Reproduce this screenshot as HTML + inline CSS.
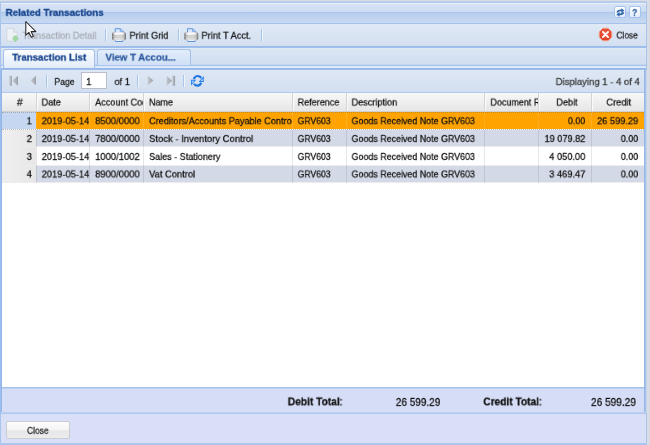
<!DOCTYPE html>
<html>
<head>
<meta charset="utf-8">
<style>
*{box-sizing:border-box;margin:0;padding:0}
html,body{width:650px;height:445px;overflow:hidden;background:#d8dce4;font-family:"Liberation Sans",sans-serif;font-size:10px;color:#111}
div{position:absolute;white-space:nowrap}
.t{left:0;top:0;line-height:16px;height:16px;will-change:transform;transform-origin:0 0;-webkit-text-stroke:0.3px}
.sep{width:2px;height:12px;border-left:1px solid #a9c5ec;border-right:1px solid #eef4fc}
.hl{top:93px;width:1px;height:18px;background:#d4d4d4}
.hl2{top:93px;width:1px;height:18px;background:#fbfbfb}
.cl{overflow:hidden}
.tool{top:6px;width:12px;height:12px;border:1px solid #a6c4ec;border-radius:2px;background:linear-gradient(#fdfeff,#e3edfb)}
</style>
</head>
<body>

<div style="left:0;top:1px;width:647px;height:444px;background:#a8c4ec;border-radius:3px 3px 0 0"></div>
<div style="left:0;top:1px;width:647px;height:1px;background:#bccde8;border-radius:3px 3px 0 0"></div>
<div style="left:0;top:2px;width:647px;height:1px;background:#b2caee"></div>
<div style="left:1px;top:3px;width:645px;height:441px;background:#d3e1f4"></div>
<div style="left:1px;top:3px;width:645px;height:20px;background:linear-gradient(#e8eff9 0,#e8eff9 1px,#d6e3f5 1px,#cedcf2 9px,#abc6ec 9px,#abc6ec 10px,#b8ceed 10px,#c8daf2 20px)"></div>
<div class="tool" style="left:614px"></div><div class="tool" style="left:629px"></div>
<div style="left:1px;top:23px;width:645px;height:1px;background:#a5c3ea"></div>
<div style="left:1px;top:24px;width:645px;height:22px;background:linear-gradient(#e0e8f5,#d3e0f1)"></div>
<div style="left:1px;top:46px;width:645px;height:2px;background:linear-gradient(#9bbcea 0,#9bbcea 50%,#a0bfeb 50%,#a0bfeb 100%)"></div>
<div class="sep" style="left:105px;top:29px"></div>
<div class="sep" style="left:178px;top:29px"></div>
<div class="sep" style="left:261px;top:29px"></div>
<div style="left:1px;top:48px;width:645px;height:17px;background:linear-gradient(#e0e9f6 0,#e0e9f6 1px,#dbe5f4 1px,#d0def1 100%)"></div>
<div style="left:1px;top:64px;width:645px;height:1px;background:#c2d5f0"></div>
<div style="left:1px;top:65px;width:645px;height:1px;background:#a9c5ec"></div>
<div style="left:1px;top:66px;width:645px;height:2px;background:linear-gradient(#d9e6f8 0,#d9e6f8 50%,#e2ecfb 50%,#e2ecfb 100%)"></div>
<div style="left:1px;top:68px;width:645px;height:2px;background:linear-gradient(#94b7e8 0,#94b7e8 50%,#9ebeea 50%,#9ebeea 100%)"></div>
<div style="left:3px;top:49px;width:92px;height:19px;border:1px solid #a3c1ea;border-bottom:none;border-radius:3px 3px 0 0;background:linear-gradient(#fbfdff,#e2ecfa)"></div>
<div style="left:97px;top:49px;width:94px;height:16px;border:1px solid #a3c1ea;border-bottom:none;border-radius:3px 3px 0 0;background:linear-gradient(#e2edfb,#d1e0f6)"></div>
<div style="left:2px;top:70px;width:642px;height:22px;background:linear-gradient(#dee7f4,#d3dff0)"></div>
<div style="left:2px;top:92px;width:642px;height:1px;background:#b0c9ed"></div>
<div style="left:0;top:70px;width:2px;height:343px;background:linear-gradient(90deg,#9dbeec 0,#9dbeec 50%,#92b6ea 50%,#92b6ea 100%)"></div>
<div style="left:644px;top:70px;width:3px;height:343px;background:linear-gradient(90deg,#92b6ea 0,#92b6ea 33.3%,#a6c3ec 33.3%,#a6c3ec 66.6%,#c6d5ea 66.6%,#c6d5ea 100%)"></div>
<div class="sep" style="left:46px;top:75px"></div>
<div style="left:81px;top:72px;width:26px;height:17px;border:1px solid #b9bdcc;background:#fff"></div>
<div class="sep" style="left:137px;top:75px"></div>
<div class="sep" style="left:183px;top:75px"></div>
<div style="left:2px;top:93px;width:642px;height:294px;background:#fff"></div>
<div style="left:2px;top:93px;width:642px;height:18px;background:linear-gradient(#f8f8f8,#e6e6e6)"></div>
<div style="left:2px;top:111px;width:642px;height:1px;background:#d0d0d0"></div>
<div class="hl" style="left:36px"></div><div class="hl2" style="left:37px"></div>
<div class="hl" style="left:89px"></div><div class="hl2" style="left:90px"></div>
<div class="hl" style="left:143px"></div><div class="hl2" style="left:144px"></div>
<div class="hl" style="left:292px"></div><div class="hl2" style="left:293px"></div>
<div class="hl" style="left:346px"></div><div class="hl2" style="left:347px"></div>
<div class="hl" style="left:484px"></div><div class="hl2" style="left:485px"></div>
<div class="hl" style="left:538px"></div><div class="hl2" style="left:539px"></div>
<div class="hl" style="left:591px"></div><div class="hl2" style="left:592px"></div>
<div style="left:2px;top:112.4px;width:642px;height:16.5px;background:#ffa300"></div>
<div style="left:2px;top:112.4px;width:33.5px;height:16.5px;background:#c6d8f1"></div>
<div style="left:2px;top:130px;width:642px;height:16.4px;background:#d3d9e6"></div>
<div style="left:2px;top:130px;width:33.5px;height:16.4px;background:linear-gradient(90deg,#efefef,#e7e7e7)"></div>
<div style="left:2px;top:147.4px;width:642px;height:17.3px;background:#ffffff"></div>
<div style="left:2px;top:147.4px;width:33.5px;height:17.3px;background:linear-gradient(90deg,#efefef,#e7e7e7)"></div>
<div style="left:2px;top:165.6px;width:642px;height:16.6px;background:#d3d9e6"></div>
<div style="left:2px;top:165.6px;width:33.5px;height:16.6px;background:linear-gradient(90deg,#efefef,#e7e7e7)"></div>
<div style="left:2px;top:146.4px;width:642px;height:1px;background:#ededed"></div>
<div style="left:2px;top:164.6px;width:642px;height:1px;background:#ededed"></div>
<div style="left:2px;top:182.2px;width:642px;height:1px;background:#ededed"></div>
<div style="left:36px;top:130px;width:1px;height:53px;background:rgba(90,90,100,0.15)"></div>
<div style="left:36px;top:113px;width:1px;height:16px;border-left:1px dotted rgba(255,235,200,0.3)"></div>
<div style="left:89px;top:130px;width:1px;height:53px;background:rgba(90,90,100,0.15)"></div>
<div style="left:89px;top:113px;width:1px;height:16px;border-left:1px dotted rgba(255,235,200,0.3)"></div>
<div style="left:143px;top:130px;width:1px;height:53px;background:rgba(90,90,100,0.15)"></div>
<div style="left:143px;top:113px;width:1px;height:16px;border-left:1px dotted rgba(255,235,200,0.3)"></div>
<div style="left:292px;top:130px;width:1px;height:53px;background:rgba(90,90,100,0.15)"></div>
<div style="left:292px;top:113px;width:1px;height:16px;border-left:1px dotted rgba(255,235,200,0.3)"></div>
<div style="left:346px;top:130px;width:1px;height:53px;background:rgba(90,90,100,0.15)"></div>
<div style="left:346px;top:113px;width:1px;height:16px;border-left:1px dotted rgba(255,235,200,0.3)"></div>
<div style="left:484px;top:130px;width:1px;height:53px;background:rgba(90,90,100,0.15)"></div>
<div style="left:484px;top:113px;width:1px;height:16px;border-left:1px dotted rgba(255,235,200,0.3)"></div>
<div style="left:538px;top:130px;width:1px;height:53px;background:rgba(90,90,100,0.15)"></div>
<div style="left:538px;top:113px;width:1px;height:16px;border-left:1px dotted rgba(255,235,200,0.3)"></div>
<div style="left:591px;top:130px;width:1px;height:53px;background:rgba(90,90,100,0.15)"></div>
<div style="left:591px;top:113px;width:1px;height:16px;border-left:1px dotted rgba(255,235,200,0.3)"></div>
<div style="left:2px;top:112px;width:642px;height:1px;border-top:1px dotted rgba(110,100,80,0.4)"></div>
<div style="left:2px;top:129px;width:642px;height:1px;border-top:1px dotted rgba(110,100,80,0.45)"></div>
<div style="left:2px;top:387px;width:642px;height:27px;background:#d6ddf6"></div>
<div style="left:2px;top:387px;width:642px;height:2px;background:linear-gradient(#a3c2ea 0,#a3c2ea 50%,#bdd0f1 50%,#bdd0f1 100%)"></div>
<div style="left:1px;top:412px;width:645px;height:31px;background:#d8dff7"></div>
<div style="left:1px;top:412px;width:645px;height:2px;background:linear-gradient(#c0d1f2 0,#c0d1f2 50%,#b0c8ee 50%,#b0c8ee 100%)"></div>
<div style="left:0;top:443px;width:647px;height:2px;background:#abc5ec"></div>
<div style="left:6px;top:421px;width:64px;height:18px;border:1px solid #cbccd1;border-radius:2px;background:linear-gradient(#fdfdfd 0,#f5f5f5 50%,#e7e7e7 55%,#ececec 100%)"></div>
<div class="t" style="font-size:11px;color:#15428b;font-weight:bold;transform:translate(5.60px,5.48px) scale(0.8866,0.86)">Related Transactions</div>
<div class="t" style="font-size:11px;color:#3566a6;font-weight:bold;transform:translate(632.10px,5.58px) scale(0.7571,0.86)">?</div>
<div class="t" style="font-size:11px;color:#a9adb4;transform:translate(22.50px,28.38px) scale(0.8383,0.86)">Transaction Detail</div>
<div class="t" style="font-size:11px;color:#1a1a1a;transform:translate(129.60px,28.38px) scale(0.8352,0.86)">Print Grid</div>
<div class="t" style="font-size:11px;color:#1a1a1a;transform:translate(201.50px,28.38px) scale(0.8439,0.86)">Print T Acct.</div>
<div class="t" style="font-size:11px;color:#1a1a1a;transform:translate(616.50px,28.18px) scale(0.7534,0.86)">Close</div>
<div class="t" style="font-size:11px;color:#15428b;font-weight:bold;transform:translate(12.20px,50.28px) scale(0.8773,0.86)">Transaction List</div>
<div class="t" style="font-size:11px;color:#2f5b9e;font-weight:bold;transform:translate(105.50px,50.28px) scale(0.8765,0.86)">View T Accou...</div>
<div class="t" style="font-size:11px;color:#1a1a1a;transform:translate(54.50px,74.68px) scale(0.7821,0.86)">Page</div>
<div class="t" style="font-size:11px;color:#111;transform:translate(86.20px,74.68px) scale(0.85,0.86)">1</div>
<div class="t" style="font-size:11px;color:#1a1a1a;transform:translate(114.50px,74.68px) scale(0.8393,0.86)">of 1</div>
<div class="t" style="font-size:11px;color:#3a3a3a;transform:translate(555.70px,74.68px) scale(0.8651,0.86)">Displaying 1 - 4 of 4</div>
<div class="cl" style="left:3px;top:94px;width:32.5px;height:16px"><div class="t" style="font-size:11px;color:#111;transform:translate(13.90px,1.18px) scale(0.9429,0.86)">#</div></div>
<div class="cl" style="left:37px;top:94px;width:51.5px;height:16px"><div class="t" style="font-size:11px;color:#111;transform:translate(4.60px,1.18px) scale(0.8305,0.86)">Date</div></div>
<div class="cl" style="left:90px;top:94px;width:52.5px;height:16px"><div class="t" style="font-size:11px;color:#111;transform:translate(5.20px,1.18px) scale(0.8263,0.86)">Account Code</div></div>
<div class="cl" style="left:144px;top:94px;width:147.5px;height:16px"><div class="t" style="font-size:11px;color:#111;transform:translate(5.00px,1.18px) scale(0.8144,0.86)">Name</div></div>
<div class="cl" style="left:293px;top:94px;width:52.5px;height:16px"><div class="t" style="font-size:11px;color:#111;transform:translate(4.70px,1.18px) scale(0.8176,0.86)">Reference</div></div>
<div class="cl" style="left:347px;top:94px;width:136.5px;height:16px"><div class="t" style="font-size:11px;color:#111;transform:translate(4.60px,1.18px) scale(0.8287,0.86)">Description</div></div>
<div class="cl" style="left:485px;top:94px;width:52.5px;height:16px"><div class="t" style="font-size:11px;color:#111;transform:translate(5.50px,1.18px) scale(0.814,0.86)">Document Ref</div></div>
<div class="cl" style="left:539px;top:94px;width:51.5px;height:16px"><div class="t" style="font-size:11px;color:#111;transform:translate(17.40px,1.18px) scale(0.8274,0.86)">Debit</div></div>
<div class="cl" style="left:592px;top:94px;width:50.5px;height:16px"><div class="t" style="font-size:11px;color:#111;transform:translate(14.40px,1.18px) scale(0.84,0.86)">Credit</div></div>
<div class="t" style="font-size:11px;color:#111;transform:translate(26.70px,113.88px) scale(0.85,0.86)">1</div>
<div class="cl" style="left:37px;top:112px;width:51.5px;height:16px"><div class="t" style="font-size:11px;color:#111;transform:translate(4.70px,1.88px) scale(0.8459,0.86)">2019-05-14</div></div>
<div class="cl" style="left:90px;top:112px;width:52.5px;height:16px"><div class="t" style="font-size:11px;color:#111;transform:translate(5.20px,1.88px) scale(0.8539,0.86)">8500/0000</div></div>
<div class="cl" style="left:144px;top:112px;width:147.5px;height:16px"><div class="t" style="font-size:11px;color:#111;transform:translate(5.10px,1.88px) scale(0.8297,0.86)">Creditors/Accounts Payable Control</div></div>
<div class="cl" style="left:293px;top:112px;width:52.5px;height:16px"><div class="t" style="font-size:11px;color:#111;transform:translate(4.70px,1.88px) scale(0.7833,0.86)">GRV603</div></div>
<div class="cl" style="left:347px;top:112px;width:136.5px;height:16px"><div class="t" style="font-size:11px;color:#111;transform:translate(4.60px,1.88px) scale(0.8076,0.86)">Goods Received Note GRV603</div></div>
<div class="t" style="font-size:11px;color:#111;transform:translate(567.90px,113.88px) scale(0.8125,0.86)">0.00</div>
<div class="t" style="font-size:11px;color:#111;transform:translate(597.10px,113.88px) scale(0.8398,0.86)">26 599.29</div>
<div class="t" style="font-size:11px;color:#111;transform:translate(26.70px,131.68px) scale(0.85,0.86)">2</div>
<div class="cl" style="left:37px;top:130px;width:51.5px;height:16px"><div class="t" style="font-size:11px;color:#111;transform:translate(4.70px,1.68px) scale(0.8459,0.86)">2019-05-14</div></div>
<div class="cl" style="left:90px;top:130px;width:52.5px;height:16px"><div class="t" style="font-size:11px;color:#111;transform:translate(5.20px,1.68px) scale(0.8539,0.86)">7800/0000</div></div>
<div class="cl" style="left:144px;top:130px;width:147.5px;height:16px"><div class="t" style="font-size:11px;color:#111;transform:translate(5.10px,1.68px) scale(0.8598,0.86)">Stock - Inventory Control</div></div>
<div class="cl" style="left:293px;top:130px;width:52.5px;height:16px"><div class="t" style="font-size:11px;color:#111;transform:translate(4.70px,1.68px) scale(0.7833,0.86)">GRV603</div></div>
<div class="cl" style="left:347px;top:130px;width:136.5px;height:16px"><div class="t" style="font-size:11px;color:#111;transform:translate(4.60px,1.68px) scale(0.8076,0.86)">Goods Received Note GRV603</div></div>
<div class="t" style="font-size:11px;color:#111;transform:translate(544.60px,131.68px) scale(0.8317,0.86)">19 079.82</div>
<div class="t" style="font-size:11px;color:#111;transform:translate(620.80px,131.68px) scale(0.8125,0.86)">0.00</div>
<div class="t" style="font-size:11px;color:#111;transform:translate(26.70px,149.58px) scale(0.85,0.86)">3</div>
<div class="cl" style="left:37px;top:148px;width:51.5px;height:16px"><div class="t" style="font-size:11px;color:#111;transform:translate(4.70px,1.58px) scale(0.8459,0.86)">2019-05-14</div></div>
<div class="cl" style="left:90px;top:148px;width:52.5px;height:16px"><div class="t" style="font-size:11px;color:#111;transform:translate(5.20px,1.58px) scale(0.8539,0.86)">1000/1002</div></div>
<div class="cl" style="left:144px;top:148px;width:147.5px;height:16px"><div class="t" style="font-size:11px;color:#111;transform:translate(5.10px,1.58px) scale(0.8211,0.86)">Sales - Stationery</div></div>
<div class="cl" style="left:293px;top:148px;width:52.5px;height:16px"><div class="t" style="font-size:11px;color:#111;transform:translate(4.70px,1.58px) scale(0.7833,0.86)">GRV603</div></div>
<div class="cl" style="left:347px;top:148px;width:136.5px;height:16px"><div class="t" style="font-size:11px;color:#111;transform:translate(4.60px,1.58px) scale(0.8076,0.86)">Goods Received Note GRV603</div></div>
<div class="t" style="font-size:11px;color:#111;transform:translate(549.20px,149.58px) scale(0.8431,0.86)">4 050.00</div>
<div class="t" style="font-size:11px;color:#111;transform:translate(620.80px,149.58px) scale(0.8125,0.86)">0.00</div>
<div class="t" style="font-size:11px;color:#111;transform:translate(26.70px,167.08px) scale(0.85,0.86)">4</div>
<div class="cl" style="left:37px;top:166px;width:51.5px;height:16px"><div class="t" style="font-size:11px;color:#111;transform:translate(4.70px,1.08px) scale(0.8459,0.86)">2019-05-14</div></div>
<div class="cl" style="left:90px;top:166px;width:52.5px;height:16px"><div class="t" style="font-size:11px;color:#111;transform:translate(5.20px,1.08px) scale(0.8539,0.86)">8900/0000</div></div>
<div class="cl" style="left:144px;top:166px;width:147.5px;height:16px"><div class="t" style="font-size:11px;color:#111;transform:translate(5.10px,1.08px) scale(0.8481,0.86)">Vat Control</div></div>
<div class="cl" style="left:293px;top:166px;width:52.5px;height:16px"><div class="t" style="font-size:11px;color:#111;transform:translate(4.70px,1.08px) scale(0.7833,0.86)">GRV603</div></div>
<div class="cl" style="left:347px;top:166px;width:136.5px;height:16px"><div class="t" style="font-size:11px;color:#111;transform:translate(4.60px,1.08px) scale(0.8076,0.86)">Goods Received Note GRV603</div></div>
<div class="t" style="font-size:11px;color:#111;transform:translate(549.20px,167.08px) scale(0.8431,0.86)">3 469.47</div>
<div class="t" style="font-size:11px;color:#111;transform:translate(620.80px,167.08px) scale(0.8125,0.86)">0.00</div>
<div class="t" style="font-size:12px;color:#111;font-weight:bold;transform:translate(287.80px,394.98px) scale(0.8507,0.86)">Debit Total</div>
<div class="t" style="font-size:12px;color:#111;transform:translate(339.30px,394.98px) scale(1.0,0.86)">:</div>
<div class="t" style="font-size:12px;color:#111;transform:translate(395.80px,395.48px) scale(0.8341,0.86)">26 599.29</div>
<div class="t" style="font-size:12px;color:#111;font-weight:bold;transform:translate(483.30px,394.98px) scale(0.8465,0.86)">Credit Total</div>
<div class="t" style="font-size:12px;color:#111;transform:translate(538.60px,394.98px) scale(1.0,0.86)">:</div>
<div class="t" style="font-size:12px;color:#111;transform:translate(591.00px,395.48px) scale(0.8415,0.86)">26 599.29</div>
<div class="t" style="font-size:11px;color:#222;transform:translate(27.00px,423.48px) scale(0.7677,0.86)">Close</div>
<svg style="position:absolute;left:0;top:0" width="650" height="445" viewBox="0 0 650 445">
<defs>
<linearGradient id="pb" x1="0" x2="1" y1="0" y2="0"><stop offset="0" stop-color="#6e6e6e"/><stop offset="0.16" stop-color="#c9c9c9"/><stop offset="0.3" stop-color="#f0f0f0"/><stop offset="0.7" stop-color="#ececec"/><stop offset="0.86" stop-color="#bdbdbd"/><stop offset="1" stop-color="#6a6a6a"/></linearGradient>
<linearGradient id="gr" x1="0" x2="1" y1="0" y2="0"><stop offset="0" stop-color="#c4c8ce"/><stop offset="1" stop-color="#999ea6"/></linearGradient>
<linearGradient id="gl" x1="0" x2="1" y1="0" y2="0"><stop offset="0" stop-color="#c9cdd3"/><stop offset="1" stop-color="#9a9fa7"/></linearGradient>
<radialGradient id="rd" cx="0.5" cy="0.4" r="0.6"><stop offset="0" stop-color="#f0664a"/><stop offset="1" stop-color="#dd3a22"/></radialGradient>

</defs>
<g opacity="0.8">
<path d="M6.8 28.5 H13.6 L17.2 32 V41 H6.8 Z" fill="#f3f5f8" stroke="#c9ced6" stroke-width="0.8"/>
<path d="M13.4 28.6 V32.2 H17" fill="#e6e9ee" stroke="#c3c8d0" stroke-width="0.6"/>
</g>
<path d="M13.9 35.9 H16.8 V38.2 H18.7 L15.35 41.7 L12 38.2 H13.9 Z" fill="#9ad698" stroke="#86cb84" stroke-width="0.5" opacity="0.9"/>
<g transform="translate(112,27.8)">
<path d="M3.2 6 V0.9 H8.4 L11.6 3.9 V6 Z" fill="#d9e7fb" stroke="#4f8ad8" stroke-width="0.9"/>
<path d="M8.3 1.1 V4 H11.3" fill="#bcd5f8" stroke="#4f8ad8" stroke-width="0.6"/>
<path d="M3.4 10.5 V13.7 H10.8 V10.5 Z" fill="#e8f0fc" stroke="#4f8ad8" stroke-width="0.9"/>
<rect x="0" y="4.5" width="14" height="8.1" rx="1.8" fill="url(#pb)"/>
<rect x="2" y="5.2" width="10" height="1.2" fill="#fbfbfb" opacity="0.85"/>
<rect x="2" y="7.6" width="10" height="2.2" fill="#a9a9a9" opacity="0.75"/>
<rect x="2.6" y="8.2" width="8.8" height="0.9" fill="#e4e4e4" opacity="0.8"/>
<rect x="2" y="10.6" width="10" height="1.3" fill="#d2d2d2" opacity="0.8"/>
</g>
<g transform="translate(184.3,27.8)">
<path d="M3.2 6 V0.9 H8.4 L11.6 3.9 V6 Z" fill="#d9e7fb" stroke="#4f8ad8" stroke-width="0.9"/>
<path d="M8.3 1.1 V4 H11.3" fill="#bcd5f8" stroke="#4f8ad8" stroke-width="0.6"/>
<path d="M3.4 10.5 V13.7 H10.8 V10.5 Z" fill="#e8f0fc" stroke="#4f8ad8" stroke-width="0.9"/>
<rect x="0" y="4.5" width="14" height="8.1" rx="1.8" fill="url(#pb)"/>
<rect x="2" y="5.2" width="10" height="1.2" fill="#fbfbfb" opacity="0.85"/>
<rect x="2" y="7.6" width="10" height="2.2" fill="#a9a9a9" opacity="0.75"/>
<rect x="2.6" y="8.2" width="8.8" height="0.9" fill="#e4e4e4" opacity="0.8"/>
<rect x="2" y="10.6" width="10" height="1.3" fill="#d2d2d2" opacity="0.8"/>
</g>
<path d="M602.9 28.3 H608.1 L611.7 31.9 V37.1 L608.1 40.7 H602.9 L599.3 37.1 V31.9 Z" fill="url(#rd)" stroke="#f29a84" stroke-width="1"/>
<path d="M602.9 31.9 L608.1 37.1 M608.1 31.9 L602.9 37.1" stroke="#fff" stroke-width="1.9" stroke-linecap="round"/>
<g fill="none" stroke="#3566a6" stroke-width="1.7">
<path d="M617.4 12.6 C617.6 10.6 619.5 10.3 622 10.5"/>
<path d="M623.4 12.2 C623.2 14.3 621.3 14.6 618.8 14.4"/>
</g>
<path d="M621.3 8.2 L624.4 10.6 L621.3 13 Z" fill="#3566a6"/>
<path d="M619.5 12 L616.4 14.4 L619.5 16.8 Z" fill="#3566a6"/>
<rect x="9.3" y="75.8" width="2.6" height="10" fill="url(#gl)"/>
<path d="M18 75.8 V85.8 L12.3 80.8 Z" fill="url(#gl)"/>
<path d="M36 75.8 V85.2 L30.5 80.5 Z" fill="url(#gl)"/>
<path d="M147.8 75.8 V85.2 L153.4 80.5 Z" fill="url(#gr)"/>
<path d="M166.6 75.8 V85.8 L172 80.8 Z" fill="url(#gr)"/>
<rect x="172.3" y="75.8" width="2.8" height="10" fill="url(#gr)"/>
<g fill="none" stroke="#2277e2" stroke-width="2.2">
<path d="M193.7 79 Q195.2 76 197.6 76 Q199.8 76 201.3 78"/>
<path d="M201.3 82.7 Q199.9 85.6 197.6 85.7 Q195.4 85.7 193.9 83.9"/>
</g>
<path d="M203.8 76 V81.9 H198.6 Z" fill="#2a80e8"/>
<path d="M202.9 78.6 V81.1 H200.6 Z" fill="#a8d8ff"/>
<path d="M191 85.6 V79.8 H196.2 Z" fill="#2a80e8"/>
<path d="M191.9 83.2 V80.7 H194.2 Z" fill="#a8d8ff"/>
<path d="M25.8 21.5 V35.2 L28.9 32.4 L31.3 37.3 L33.4 36.3 L31.1 31.6 H35.9 Z" fill="#fff" stroke="#262626" stroke-width="1.05" stroke-linejoin="round"/>
</svg>

</body>
</html>
